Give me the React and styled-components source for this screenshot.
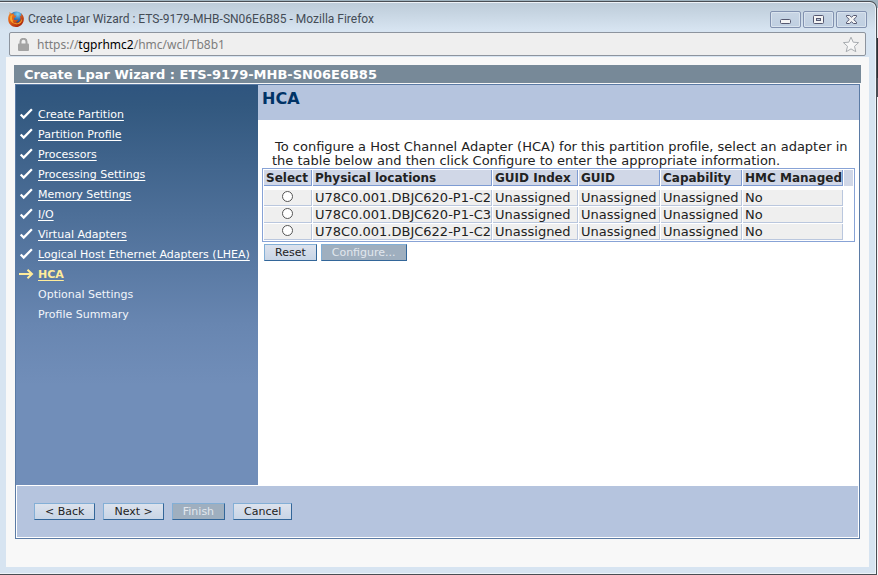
import React from "react";
import styled, { createGlobalStyle, css } from "styled-components";

const GlobalStyle = createGlobalStyle`
  *, *::before, *::after { box-sizing: border-box; }
  html, body { margin: 0; padding: 0; }
  body {
    background: #dfe3e8;
    font-family: "DejaVu Sans", sans-serif;
    color: #222;
  }
`;

const Desktop = styled.div`
  display: flex;
  min-height: 100vh;
  padding: 1px 1px 0 0;
  background: linear-gradient(#9fb3bf 0 8px, #e8eaee 8px 38px, #2e3036 38px 78px, #4b4e57 78px 97px, #f6f6f8 97px);
`;

const BrowserWindow = styled.div`
  flex: 1;
  display: flex;
  flex-direction: column;
  min-width: 0;
  padding: 0 7px 7px 6px;
  border: 1px solid #4a4e54;
  border-left: 0;
  border-radius: 0 7px 0 0;
  background: linear-gradient(#bccbd8, #d7e4f1 28px);
  box-shadow: inset 0 1px #eef3f8, inset -1px 0 #eef3f8, inset 0 -1px #eef3f8;
`;

const TitleBar = styled.header`
  display: flex;
  align-items: center;
  height: 30px;
  padding: 4px 2px 0 2px;
`;

const WindowTitle = styled.h1`
  flex: 1;
  margin: 0 0 0 4px;
  font: 400 12px/18px Roboto, sans-serif;
  color: #444c56;
  white-space: nowrap;
`;

const WindowControls = styled.div`
  display: flex;
  gap: 2px;
`;

const ControlButton = styled.button`
  display: flex;
  align-items: center;
  justify-content: center;
  width: 31px;
  height: 17px;
  padding: 0;
  border: 1px solid #8292b0;
  border-radius: 2px;
  background: linear-gradient(#c8d5e4, #bfcfe1);
  box-shadow: inset 0 0 0 1px #d9e3ee;
`;

const AddressBar = styled.form`
  display: flex;
  align-items: center;
  height: 24px;
  margin: 0 3px 1px;
  padding: 0 5px 0 8px;
  border: 1px solid #8d949e;
  border-radius: 2px;
  background: #efefef;
`;

const Address = styled.div`
  flex: 1;
  margin-left: 8px;
  padding-top: 2px;
  font: 400 12px/18px "Noto Sans", "Open Sans", sans-serif;
  color: #7d7d7d;
`;

const Host = styled.span`
  color: #000;
`;

const StarButton = styled.button`
  display: flex;
  padding: 0;
  border: 0;
  background: none;
`;

const Viewport = styled.main`
  flex: 1;
  display: flex;
  flex-direction: column;
  padding: 8px 8px 28px;
  background: #f8f8f8;
`;

const WizardTitle = styled.h2`
  margin: 0 0 1px;
  padding: 2px 10px 0;
  font-size: 13px;
  line-height: 16px;
  font-weight: 700;
  color: #fff;
  background: #778998;
`;

const Wizard = styled.section`
  flex: 1;
  display: flex;
  flex-direction: column;
  margin: 0 1px;
  border: 1px solid #5b7ba5;
  background: #fff;
`;

const WizardBody = styled.div`
  flex: 1;
  display: grid;
  grid-template-columns: 242px 1fr;
`;

const Sidebar = styled.nav`
  padding: 20px 0;
  background: linear-gradient(#2f557f 0, #32587f 20px, #6886b1 240px, #718eb9 300px);
`;

const StepList = styled.ol`
  margin: 0;
  padding: 0;
  list-style: none;
`;

const Step = styled.li`
  display: flex;
  align-items: center;
  height: 20px;
  font-size: 11px;
  line-height: 20px;
  white-space: nowrap;
`;

const StepMark = styled.span`
  flex: none;
  display: flex;
  width: 22px;
  padding-left: 3px;
`;

const StepLink = styled.a`
  color: ${(p) => (p.$current ? "#ffec9a" : "#fff")};
  font-weight: ${(p) => (p.$current ? 700 : 400)};
  text-underline-offset: 2px;
`;

const PendingStep = styled.span`
  color: #f2f5fa;
`;

const Panel = styled.div`
  min-width: 0;
`;

const PanelHeading = styled.h3`
  height: 35px;
  margin: 0;
  padding: 4px 4px;
  font-size: 16px;
  line-height: 20px;
  color: #003366;
  background: #b5c4de;
`;

const PanelBody = styled.div`
  padding: 20px 4px 0;
`;

const Intro = styled.p`
  margin: 0;
  padding: 0 0 0 10px;
  font-size: 13px;
  line-height: 14px;
  text-indent: 3px;
`;

const AdapterTable = styled.table`
  width: 100%;
  border: 1px solid #88a3d6;
  border-collapse: separate;
  border-spacing: 1px;
  table-layout: fixed;
  font-size: 13px;
  white-space: nowrap;

  tbody::before {
    content: "";
    display: block;
    height: 2px;
  }
`;

const Column = styled.col`
  width: ${(p) => p.$width};
`;

const cell = css`
  padding: 1px 0 0 2px;
  text-align: left;
  line-height: 14px;
`;

const HeadCell = styled.th`
  ${cell}
  font-size: 12px;
  background: #d0d7e7;
  border-right: 1px solid #7d9bd3;
  border-bottom: 1px solid #7d9bd3;
`;

const HeadFiller = styled.td`
  padding: 0;
  background: #d0d7e7;
`;

const Cell = styled.td`
  ${cell}
  background: #efefef;
  border-right: 1px solid #bac7de;
  border-bottom: 1px solid #bac7de;
`;

const SelectCell = styled(Cell)`
  padding: 0;
`;

const Radio = styled.input`
  appearance: none;
  display: block;
  width: 11px;
  height: 11px;
  margin: 0 auto 2px;
  border: 1px solid #555;
  border-radius: 50%;
  background: #fff;
  &:checked { background: radial-gradient(#222 0 2px, #fff 3px); }
`;

const TableActions = styled.div`
  display: flex;
  gap: 4px;
  padding: 2px 2px;
`;

const Footer = styled.footer`
  display: flex;
  gap: 8px;
  margin: 1px;
  padding: 17px 17px;
  background: #b5c4de;
`;

const Button = styled.button`
  height: 17px;
  padding: 0 10px;
  border: 1px solid;
  border-color: #83afd6 #336699 #336699 #83afd6;
  font: 400 11px/15px "DejaVu Sans", sans-serif;
  color: #222;
  background: linear-gradient(#dce2ed, #c8d5e6);
  &:disabled {
    color: #e2e7ee;
    background: #9fafbf;
  }
`;

const FirefoxLogo = () => (
  <svg width="16" height="16" viewBox="0 0 16 16" aria-hidden="true">
    <defs>
      <radialGradient id="globe" cx="0.6" cy="0.2" r="0.8">
        <stop offset="0" stopColor="#7fd0f2" />
        <stop offset="0.5" stopColor="#2872b8" />
        <stop offset="1" stopColor="#14275e" />
      </radialGradient>
      <linearGradient id="fox" x1="0" y1="0" x2="0.7" y2="1">
        <stop offset="0" stopColor="#f08a20" />
        <stop offset="0.5" stopColor="#e05c18" />
        <stop offset="1" stopColor="#a8260c" />
      </linearGradient>
    </defs>
    <circle cx="8.3" cy="7.4" r="7" fill="url(#globe)" />
    <path d="M1.6.8 3 2.7 5.6 2.6 6.3 4.4 8.5 4.8 7 6.4 5.9 7.3 6 8.6 8.2 9.2 10.2 8.2 9.6 10 7.8 11.2 10.4 11.4 12.2 9.6 12.5 6.7 11.7 4.5 13.4 5.4 13.1 2.2C15.2 4 16 6.3 15.8 8.7 15.5 12.8 12.2 16 8 16 3.7 16 .3 12.8.2 8.5.1 6.4.6 4.4 1.6 3.1Z" fill="url(#fox)" />
    <path d="M2.4 5 3.4 4.3 5 4.5 3.9 5.8 4.1 8.4 5.4 10 4.3 9.8 5.8 12 9.6 12.6 12.6 10.6 13.9 7.8 13.8 10C12.8 12.4 10.7 13.4 8.2 13.2 4.8 12.8 2.6 10.8 2 8.1Z" fill="#f7a92b" />
  </svg>
);

const LockIcon = () => (
  <svg width="11" height="13" viewBox="0 0 11 13" aria-hidden="true">
    <path d="M2.5 6V3.8a3 3 0 0 1 6 0V6" fill="none" stroke="#a3a3a3" strokeWidth="2" />
    <rect x="0" y="5.5" width="11" height="7.5" rx="1" fill="#a3a3a3" />
  </svg>
);

const StarIcon = () => (
  <svg width="18" height="17" viewBox="0 0 18 17" aria-hidden="true">
    <path d="m9 1.2 2.2 5 5.4.4-4.1 3.7 1.3 5.4L9 12.9l-4.8 2.8 1.3-5.4-4.1-3.7 5.4-.4Z" fill="#f7f7f7" stroke="#a9adb1" strokeLinejoin="round" />
  </svg>
);

const MinimizeIcon = () => (
  <svg width="11" height="11" viewBox="0 0 11 11" aria-hidden="true">
    <rect x=".5" y="5.5" width="10" height="4" rx="1" fill="#f4f4f4" stroke="#555870" />
  </svg>
);

const MaximizeIcon = () => (
  <svg width="11" height="9" viewBox="0 0 11 9" aria-hidden="true">
    <rect x=".5" y=".5" width="10" height="8" rx="1" fill="#f4f4f4" stroke="#555870" />
    <rect x="3.5" y="3.5" width="4" height="2" fill="#bdcbdc" stroke="#555870" />
  </svg>
);

const CloseIcon = () => (
  <svg width="11" height="9" viewBox="0 0 11 9" aria-hidden="true">
    <path d="M.5 .5h3l2 1.7 2-1.7h3v1.3L7.7 4.5l2.8 2.7v1.3h-3l-2-1.7-2 1.7h-3V7.2l2.8-2.7L.5 1.8Z" fill="#f4f4f4" stroke="#555870" strokeLinejoin="round" />
  </svg>
);

const CheckIcon = () => (
  <svg width="15" height="14" viewBox="0 0 15 14" aria-hidden="true">
    <path d="m1.7 6.5 3 3L12.9 1.2" fill="none" stroke="#fff" strokeWidth="2.3" />
  </svg>
);

const ArrowIcon = () => (
  <svg width="15" height="14" viewBox="0 0 15 14" aria-hidden="true">
    <path d="M0 6h13M8.5 1.8 13 6 8.5 10.2" fill="none" stroke="#ffec9a" strokeWidth="2" />
  </svg>
);

const steps = [
  { name: "Create Partition", state: "done" },
  { name: "Partition Profile", state: "done" },
  { name: "Processors", state: "done" },
  { name: "Processing Settings", state: "done" },
  { name: "Memory Settings", state: "done" },
  { name: "I/O", state: "done" },
  { name: "Virtual Adapters", state: "done" },
  { name: "Logical Host Ethernet Adapters (LHEA)", state: "done" },
  { name: "HCA", state: "current" },
  { name: "Optional Settings", state: "pending" },
  { name: "Profile Summary", state: "pending" },
];

const columns = [
  { name: "Select", width: "48px" },
  { name: "Physical locations", width: "179px" },
  { name: "GUID Index", width: "85px" },
  { name: "GUID", width: "81px" },
  { name: "Capability", width: "81px" },
  { name: "HMC Managed", width: "100px" },
];

const adapters = [
  "U78C0.001.DBJC620-P1-C2",
  "U78C0.001.DBJC620-P1-C3",
  "U78C0.001.DBJC622-P1-C2",
];

export default function App() {
  return (
    <Desktop>
      <GlobalStyle />
      <BrowserWindow>
        <TitleBar>
          <FirefoxLogo />
          <WindowTitle>Create Lpar Wizard : ETS-9179-MHB-SN06E6B85 - Mozilla Firefox</WindowTitle>
          <WindowControls>
            <ControlButton type="button" aria-label="Minimize"><MinimizeIcon /></ControlButton>
            <ControlButton type="button" aria-label="Maximize"><MaximizeIcon /></ControlButton>
            <ControlButton type="button" aria-label="Close"><CloseIcon /></ControlButton>
          </WindowControls>
        </TitleBar>
        <AddressBar onSubmit={(e) => e.preventDefault()}>
          <LockIcon />
          <Address>https://<Host>tgprhmc2</Host>/hmc/wcl/Tb8b1</Address>
          <StarButton type="button" aria-label="Bookmark this page"><StarIcon /></StarButton>
        </AddressBar>
        <Viewport>
          <WizardTitle>Create Lpar Wizard : ETS-9179-MHB-SN06E6B85</WizardTitle>
          <Wizard>
            <WizardBody>
              <Sidebar aria-label="Wizard steps">
                <StepList>
                  {steps.map(({ name, state }) => (
                    <Step key={name}>
                      <StepMark>
                        {state === "done" && <CheckIcon />}
                        {state === "current" && <ArrowIcon />}
                      </StepMark>
                      {state === "pending" ? (
                        <PendingStep>{name}</PendingStep>
                      ) : (
                        <StepLink href="#" $current={state === "current"}>{name}</StepLink>
                      )}
                    </Step>
                  ))}
                </StepList>
              </Sidebar>
              <Panel>
                <PanelHeading>HCA</PanelHeading>
                <PanelBody>
                  <Intro>
                    To configure a Host Channel Adapter (HCA) for this partition profile, select an adapter in
                    the table below and then click Configure to enter the appropriate information.
                  </Intro>
                  <AdapterTable>
                    <colgroup>
                      {columns.map((c) => <Column key={c.name} $width={c.width} />)}
                      <Column $width="auto" />
                    </colgroup>
                    <thead>
                      <tr>
                        {columns.map((c) => <HeadCell key={c.name} scope="col">{c.name}</HeadCell>)}
                        <HeadFiller />
                      </tr>
                    </thead>
                    <tbody>
                      {adapters.map((location) => (
                        <tr key={location}>
                          <SelectCell>
                            <Radio type="radio" name="adapter" value={location} aria-label={location} />
                          </SelectCell>
                          <Cell>{location}</Cell>
                          <Cell>Unassigned</Cell>
                          <Cell>Unassigned</Cell>
                          <Cell>Unassigned</Cell>
                          <Cell>No</Cell>
                        </tr>
                      ))}
                    </tbody>
                  </AdapterTable>
                  <TableActions>
                    <Button type="button">Reset</Button>
                    <Button type="button" disabled>Configure...</Button>
                  </TableActions>
                </PanelBody>
              </Panel>
            </WizardBody>
            <Footer>
              <Button type="button">&lt; Back</Button>
              <Button type="button">Next &gt;</Button>
              <Button type="button" disabled>Finish</Button>
              <Button type="button">Cancel</Button>
            </Footer>
          </Wizard>
        </Viewport>
      </BrowserWindow>
    </Desktop>
  );
}
